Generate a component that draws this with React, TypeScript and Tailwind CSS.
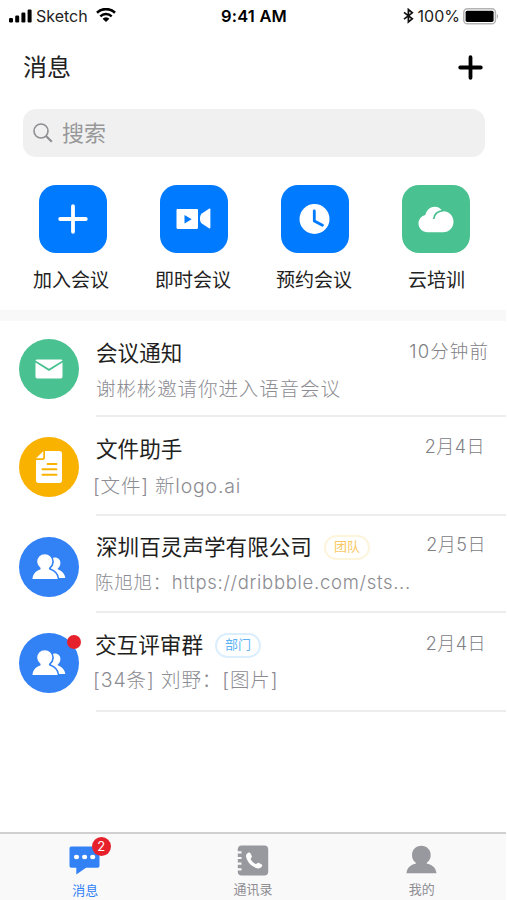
import { ReactNode } from "react";

interface Action {
  label: string;
  labelStyle?: string;
  tile: string;
  icon: ReactNode;
}

interface Message {
  title: string;
  text: string;
  date: string;
  row: string;
  avatar: string;
  titleStyle: string;
  textStyle: string;
  dateStyle: string;
  icon: ReactNode;
  tag?: string;
  tagStyle?: string;
  unread?: boolean;
}

const SignalIcon = () => (
  <svg width="24" height="14" viewBox="0 0 24 14">
    <rect x="0" y="9" width="4" height="4.5" rx="1.2" />
    <rect x="6.2" y="6.5" width="4" height="7" rx="1.2" />
    <rect x="12.4" y="3.5" width="4" height="10" rx="1.2" />
    <rect x="18.6" y="0.5" width="4" height="13" rx="1.2" />
  </svg>
);

const WifiIcon = () => (
  <svg width="20" height="14" viewBox="0 0 20 14" fill="none" stroke="black">
    <path d="M1 4.700a13 13 0 0 1 18 0" strokeWidth="2.6" />
    <path d="M4.300 8.300a8.300 8.300 0 0 1 11.400 0" strokeWidth="2.4" />
    <path d="M6.600 10.700a4.600 4.600 0 0 1 6.800 0L10 14z" fill="black" stroke="none" />
  </svg>
);

const BluetoothIcon = () => (
  <svg width="11" height="16" viewBox="0 0 11 16" fill="none" stroke="#111" strokeWidth="1.7">
    <path d="M1 4.400l8.300 6.400L5.400 14V1.500l3.900 3.300L1 11.200" />
  </svg>
);

const BatteryIcon = () => (
  <svg width="36" height="17" viewBox="0 0 36 17">
    <rect x="0.8" y="0.8" width="31.6" height="15" rx="3.6" fill="white" stroke="#b3b3b3" strokeWidth="1.5" />
    <rect x="2.6" y="2.7" width="28" height="11.2" rx="1.6" fill="black" />
    <path d="M33.800 6c1.800.8 1.800 4 0 4.800z" fill="#b3b3b3" />
  </svg>
);

const SearchIcon = () => (
  <svg width="20" height="20" viewBox="0 0 20 20" fill="none" stroke="#8e8e93" strokeWidth="1.6">
    <circle cx="8" cy="8" r="7" />
    <path d="M13 13l5.800 5.800" strokeWidth="2.2" />
  </svg>
);

const JoinIcon = () => (
  <svg width="30" height="30" viewBox="0 0 30 30" stroke="white" strokeWidth="3.8" strokeLinecap="round">
    <path d="M15 2.200v25.600M2.200 15h25.600" />
  </svg>
);

const VideoIcon = () => (
  <svg width="35" height="22" viewBox="0 0 35 22" fill="white">
    <path
      fillRule="evenodd"
      d="M1.600 1h19.300c.6 0 1.100.5 1.100 1.100v17.700c0 .6-.5 1.200-1.100 1.200H1.600c-.6 0-1.100-.6-1.100-1.200V2.100C.5 1.500 1 1 1.600 1zM8.500 7v8.500l7.200-4.200z"
    />
    <path d="M33 .8c.8-.5 1.400-.1 1.400.8v17.800c0 .9-.6 1.300-1.400.8l-6.800-4.400c-3-2-3-8.600 0-10.600z" />
  </svg>
);

const ClockIcon = () => (
  <svg width="32" height="32" viewBox="0 0 32 32" fill="none">
    <circle cx="15.500" cy="16" r="15" fill="white" />
    <path d="M15.300 8v10l8.200 4.200" stroke="#007aff" strokeWidth="2.8" strokeLinecap="round" strokeLinejoin="round" />
  </svg>
);

const CloudIcon = () => (
  <svg width="36" height="27" viewBox="0 0 36 27">
    <path
      d="M9.500 26.200C4.500 26.200.5 22.300.5 17.500c0-4.200 2.900-7.500 6.900-8.400C8.300 4.300 12.300.8 17 .8c3 0 5.400 1.400 7 3.800l1.300.7c5.700 0 10.200 4.400 10.200 10.400s-4.600 10.500-10.200 10.500z"
      fill="white"
    />
    <path d="M15.700 13c.5-4.600 4-7.900 9.400-8.400" fill="none" stroke="#4ac191" strokeWidth="1.8" />
  </svg>
);

const MailIcon = () => (
  <svg width="28" height="20" viewBox="0 0 28 20" fill="white">
    <path d="M2 .5h24c.8 0 1.300.4 1.500 1L14 9.700.5 1.500c.2-.6.700-1 1.500-1z" />
    <path d="M.5 3.500L14 12l13.500-8.500v14c0 1.200-.7 2-1.900 2H2.400c-1.200 0-1.900-.8-1.900-2z" />
  </svg>
);

const FileIcon = () => (
  <svg width="28" height="34" viewBox="0 0 28 34">
    <path d="M10 1h14.500C26 1 27 2 27 3.500v27c0 1.500-1 2.500-2.500 2.500h-21C2 33 1 32 1 30.500V10h6.500C9.200 10 10 9.200 10 7.500z" fill="white" />
    <path d="M8.300 1.300v5.500c0 1-.5 1.500-1.500 1.500H1z" fill="white" />
    <path d="M12.500 14h9M7.500 19.200h14M7.500 24.800h14" stroke="#f9b200" strokeWidth="1.900" strokeLinecap="round" />
  </svg>
);

const GroupIcon = () => (
  <svg width="34" height="26" viewBox="0 0 34 26" fill="white">
    <path d="M19.500 4.300c1-.6 2.200-.9 3.400-.9 3.300 0 5.500 2.400 5.500 5.500 0 2.200-.9 4-2.300 5.200-.6.500-.5 1.100.2 1.400 4.200 1.700 6.600 4.700 7 8.500h-9.600l-6-12z" />
    <g stroke="#3282f6" strokeWidth="3.2" paintOrder="stroke">
      <path d="M.5 25c.3-4.700 2.800-7.900 7.200-9.300 1.100-.4 1.200-1.300.5-2.100A7.500 7.500 0 1 1 17.300 13.600c-.7.8-.6 1.700.5 2.100 4.600 1.500 7.500 4.800 7.900 9.300z" />
    </g>
  </svg>
);

const ChatIcon = () => (
  <svg width="31" height="29" viewBox="0 0 31 29">
    <path d="M2.500.5h26C29.800.5 30.500 1.200 30.500 2.500v17.200c0 1.300-.7 2-2 2H17L7.300 28.500v-6.800H2.500c-1.300 0-2-.7-2-2V2.500C.5 1.200 1.200.5 2.500.5z" fill="#3282f6" />
    <ellipse cx="7.500" cy="11" rx="2.600" ry="2.200" fill="white" />
    <ellipse cx="15.600" cy="11" rx="2.600" ry="2.200" fill="white" />
    <ellipse cx="23.700" cy="11" rx="2.600" ry="2.200" fill="white" />
  </svg>
);

const ContactsIcon = () => (
  <svg width="32" height="31" viewBox="0 0 32 31">
    <path d="M4.500.5h23c2.300 0 3.700 1.400 3.700 3.700v22.600c0 2.300-1.400 3.700-3.700 3.700h-23c-2.300 0-3.700-1.200-3.700-3.700V4.200C.8 1.900 2.200.5 4.500.5z" fill="#98989f" />
    <path d="M0 7.300h4.500M0 13h4.500M0 18.700h4.500M0 24.400h4.500" stroke="#f9f9f9" strokeWidth="2.200" />
    <path
      d="M11 7.800c1-.7 2.100-.4 2.600.6l1.100 2.300c.4.900.1 1.500-.6 2.200-.6.600-.5 1.100-.1 1.800 1 1.800 2.400 3.100 4.200 4.100.8.400 1.200.4 1.700-.2.700-.8 1.400-.9 2.200-.5l2.200 1.100c1 .5 1.200 1.400.6 2.400-1 1.600-2.900 2.200-4.900 1.600-5.500-1.700-9.400-5.500-10.800-10.900-.5-1.900.2-3.500 1.800-4.500z"
      fill="white"
    />
  </svg>
);

const ProfileIcon = () => (
  <svg width="31" height="29" viewBox="0 0 31 29" fill="#98989f">
    <path d="M15.300.7c5.400 0 9.400 4 9.400 9.200 0 3.400-1.500 5.900-3.700 7.500-.8.600-.5 1.100.3 1.300 5.500 1.200 8.700 4.300 9.200 9.500H.5c.5-5.200 3.600-8.300 8.800-9.500.8-.2 1.100-.7.300-1.300-2.200-1.600-3.600-4.100-3.600-7.500C6 4.700 9.900.7 15.300.7z" />
  </svg>
);

const actions: Action[] = [
  { label: "加入会议", labelStyle: "mr-[3px]", tile: "bg-[#007aff]", icon: <JoinIcon /> },
  { label: "即时会议", labelStyle: "mr-px", tile: "bg-[#007aff]", icon: <VideoIcon /> },
  { label: "预约会议", labelStyle: "mr-px", tile: "bg-[#007aff]", icon: <ClockIcon /> },
  { label: "云培训", labelStyle: "ml-0.5", tile: "bg-[#4ac191]", icon: <CloudIcon /> },
];

const messages: Message[] = [
  {
    title: "会议通知",
    text: "谢彬彬邀请你进入语音会议",
    date: "10分钟前",
    row: "h-24",
    avatar: "mt-[18px] bg-[#4ac191]",
    titleStyle: "mt-4",
    textStyle: "mt-1.5 text-[19.5px] tracking-[0.9px]",
    dateStyle: "mt-4 mr-[17px] text-[18.5px] tracking-[1.1px]",
    icon: <MailIcon />,
  },
  {
    title: "文件助手",
    text: "[文件] 新logo.ai",
    date: "2月4日",
    row: "h-[99px]",
    avatar: "mt-5 bg-[#f9b200]",
    titleStyle: "mt-4",
    textStyle: "mt-[7px] -ml-[3px] text-[19.5px] tracking-[0.8px]",
    dateStyle: "mt-4 mr-[21px] text-[18px] tracking-[0.5px]",
    icon: <FileIcon />,
  },
  {
    title: "深圳百灵声学有限公司",
    text: "陈旭旭：https://dribbble.com/sts...",
    date: "2月5日",
    row: "h-[97px]",
    avatar: "mt-[21px] bg-[#3282f6]",
    titleStyle: "mt-[15px]",
    textStyle: "mt-[5px] -ml-px text-[18.5px] tracking-[0.7px]",
    dateStyle: "mt-[15px] mr-5 text-[18px] tracking-[0.5px]",
    icon: <GroupIcon />,
    tag: "团队",
    tagStyle: "border-[#fdf4dc] text-[#f9c862]",
  },
  {
    title: "交互评审群",
    text: "[34条] 刘野：[图片]",
    date: "2月4日",
    row: "h-[99px]",
    avatar: "mt-[20px] bg-[#3282f6]",
    titleStyle: "mt-4 -ml-px",
    textStyle: "mt-[5px] -ml-[3px] text-[19.5px] tracking-[0.9px]",
    dateStyle: "mt-[17px] mr-5 text-[18px] tracking-[0.5px]",
    icon: <GroupIcon />,
    tag: "部门",
    tagStyle: "border-[#daeefe] text-[#5cb3f7]",
    unread: true,
  },
];

const StatusBar = () => (
  <div className="grid h-8 grid-cols-3 items-center pr-[7px] pl-[9px] text-[16px] leading-none text-[#222]">
    <div className="flex items-center">
      <SignalIcon />
      <span className="ml-[3px]">Sketch</span>
      <span className="ml-2 -mt-0.5">
        <WifiIcon />
      </span>
    </div>
    <span className="text-center text-[16.5px] font-semibold tracking-[0.2px] text-black">9:41 AM</span>
    <div className="flex items-center justify-end">
      <BluetoothIcon />
      <span className="mr-[3px] ml-1">100%</span>
      <BatteryIcon />
    </div>
  </div>
);

const MessageRow = ({ item }: { item: Message }) => (
  <div className={`flex pl-[19px] ${item.row}`}>
    <div className={`relative flex size-[60px] shrink-0 items-center justify-center rounded-full ${item.avatar}`}>
      {item.icon}
      {item.unread && <span className="absolute top-[2px] -right-[2px] size-[14px] rounded-full bg-[#e6212c]" />}
    </div>
    <div className="ml-[17px] flex min-w-0 flex-1 justify-between border-b-2 border-[#ededee]">
      <div className="min-w-0">
        <div className={`flex h-8 items-center ${item.titleStyle}`}>
          <span className="text-[21.6px] leading-8 whitespace-nowrap text-[#1f1f22]">{item.title}</span>
          {item.tag && (
            <span className={`ml-3 flex h-[25px] w-[46px] shrink-0 items-center justify-center rounded-full border-2 text-[13px] ${item.tagStyle}`}>
              {item.tag}
            </span>
          )}
        </div>
        <p className={`h-7 leading-7 font-light whitespace-nowrap text-[#8c8c92] ${item.textStyle}`}>{item.text}</p>
      </div>
      <span className={`h-7 shrink-0 leading-7 font-light whitespace-nowrap text-[#808085] ${item.dateStyle}`}>{item.date}</span>
    </div>
  </div>
);

const App = () => {
  return (
    <div className="flex h-[900px] w-[507px] flex-col overflow-hidden bg-white pr-px font-['Inter','Noto_Sans_CJK_SC',sans-serif]">
      <StatusBar />
      <header className="flex h-[77px] items-start justify-between pr-[23px] pl-[23px]">
        <h1 className="mt-[18px] text-[24px] leading-9 text-[#222]">消息</h1>
        <svg className="mt-[23px]" width="25" height="25" viewBox="0 0 25 25" stroke="black" strokeWidth="3.8" strokeLinecap="round">
          <path d="M12.500 2.200v20.600M2.200 12.500h20.600" />
        </svg>
      </header>
      <div className="mr-[21px] ml-[23px] flex h-12 shrink-0 items-center rounded-[13px] bg-[#f0f0f0] pl-[10px]">
        <SearchIcon />
        <span className="ml-[9px] text-[22px] leading-8 text-[#98989a]">搜索</span>
      </div>
      <nav className="mt-7 flex h-[125px] shrink-0 pl-[12px]">
        {actions.map((a) => (
          <div key={a.label} className="flex w-[121px] flex-col items-center">
            <div className={`flex size-[68px] items-center justify-center rounded-[17px] ${a.tile}`}>{a.icon}</div>
            <span className={`mt-3.5 text-[19px] leading-7 text-[#222] ${a.labelStyle}`}>{a.label}</span>
          </div>
        ))}
      </nav>
      <div className="h-[11px] shrink-0 bg-[#f8f8f8]" />
      <main className="flex-1">
        {messages.map((m) => (
          <MessageRow key={m.title} item={m} />
        ))}
      </main>
      <footer className="grid h-[68px] shrink-0 grid-cols-3 border-t-2 border-[#d0d0d1] bg-[#f9f9f9] text-[13px] leading-5 text-[#8e8e93]">
        <div className="flex flex-col items-center">
          <div className="relative mt-3 h-[34px]">
            <ChatIcon />
            <span className="absolute -top-[9px] -right-[11px] flex size-[19px] items-center justify-center rounded-full bg-[#e6212c] text-[13px] leading-none text-white">
              2
            </span>
          </div>
          <span className="ml-0.5 text-[#3282f6]">消息</span>
        </div>
        <div className="flex flex-col items-center">
          <div className="mt-[11px] h-[34px]">
            <ContactsIcon />
          </div>
          <span>通讯录</span>
        </div>
        <div className="flex flex-col items-center">
          <div className="mt-[11px] h-[34px]">
            <ProfileIcon />
          </div>
          <span>我的</span>
        </div>
      </footer>
    </div>
  );
};

export default App;
